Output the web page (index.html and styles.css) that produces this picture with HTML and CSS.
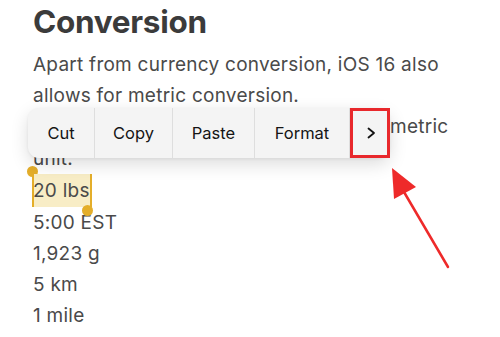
FILE: index.html
```html
<!DOCTYPE html>
<html>
<head>
  <title>Conversion</title>
  <meta charset="UTF-8" />
  <link rel="stylesheet" href="styles.css">
</head>
<body>
  <div class="note">
    <h1>Conversion</h1>
    <p class="intro">Apart from currency conversion, iOS 16 also<br>allows for metric conversion.<br>Select a value to convert to a different metric<br>unit.</p>

    <ul class="values">
      <li><span class="selected">20 lbs</span></li>
      <li>5:00 EST</li>
      <li>1,923 g</li>
      <li>5 km</li>
      <li>1 mile</li>
    </ul>

    <!-- Edit menu -->
    <div class="edit-menu">
      <span class="item cut">Cut</span>
      <span class="item copy">Copy</span>
      <span class="item paste">Paste</span>
      <span class="item format">Format</span>
      <span class="item more">
        <svg width="12" height="14" viewBox="0 0 12 14"><path d="M3.5 2.5l5.5 4.5-5.5 4.5" fill="none" stroke="#111" stroke-width="1.8" stroke-linecap="round" stroke-linejoin="round"/></svg>
      </span>
    </div>

    <!-- Annotation arrow -->
    <svg class="arrow" width="80" height="110" viewBox="0 0 80 110">
      <line x1="70" y1="101" x2="26" y2="26" stroke="#ee2a2a" stroke-width="2.5" stroke-linecap="round"/>
      <polygon points="14,2 38,21 16,33" fill="#ee2a2a"/>
    </svg>
  </div>
</body>
</html>
```

FILE: styles.css
```css
body {
  margin: 0;
  background: #fff;
  font-family: Inter, "Noto Sans", sans-serif;
  color: #4a4a4a;
}

.note {
  position: relative;
  width: 500px;
  height: 337px;
  padding: 0 0 0 33px;
  box-sizing: border-box;
  overflow: hidden;
}

h1 {
  margin: 0;
  padding-top: 2px;
  font-size: 31.5px;
  font-weight: 700;
  letter-spacing: -0.3px;
  color: #3b3b3b;
  line-height: 40px;
}

.intro {
  margin: 7px 0 0;
  white-space: nowrap;
  font-size: 19px;
  letter-spacing: 0.25px;
  line-height: 31.2px;
}

.values {
  list-style: none;
  margin: 0;
  padding: 0;
  font-size: 19px;
  letter-spacing: 0.25px;
  line-height: 31.2px;
}

.selected {
  position: relative;
  display: inline-block;
  background: #f8edc6;
  line-height: 33px;
  padding-right: 1px;
}

.selected::before,
.selected::after {
  content: "";
  position: absolute;
  width: 2px;
  height: 33px;
  top: 0;
  background: #e4ae2a;
}

.selected::before {
  left: -1px;
}

.selected::after {
  right: -1px;
}

.values li:first-child {
  position: relative;
}

.values li:first-child::before,
.values li:first-child::after {
  content: "";
  position: absolute;
  width: 11px;
  height: 11px;
  border-radius: 50%;
  background: #e4ae2a;
}

.values li:first-child::before {
  left: -6px;
  top: -8px;
}

.values li:first-child::after {
  left: 49px;
  top: 31px;
}

.edit-menu {
  position: absolute;
  left: 28px;
  top: 108px;
  height: 50px;
  display: flex;
  background: #f4f4f4;
  border-radius: 11px;
  box-shadow: 0 6px 18px rgba(0, 0, 0, 0.14), 0 1px 3px rgba(0, 0, 0, 0.06);
  font-size: 16.5px;
  color: #151515;
}

.item {
  display: flex;
  align-items: center;
  justify-content: center;
  box-sizing: border-box;
  border-right: 1px solid #dedede;
}

.cut { width: 67px; }
.copy { width: 78px; }
.paste { width: 82px; }
.format { width: 95px; }

.more {
  width: 40px;
  height: 50px;
  padding-left: 2px;
  border: 3px solid #e8282c;
}

.arrow {
  position: absolute;
  left: 378px;
  top: 166px;
}
```
